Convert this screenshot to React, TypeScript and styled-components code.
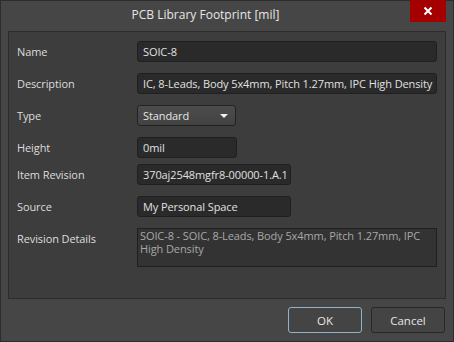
import React from 'react';
import styled, { createGlobalStyle } from 'styled-components';

const GlobalStyle = createGlobalStyle`
  html, body {
    margin: 0;
    padding: 0;
    background: #454545;
  }
  body {
    font-family: 'Open Sans', 'Noto Sans', sans-serif;
    font-size: 11px;
    letter-spacing: -0.1px;
    color: #dcdcdc;
  }
`;

const Window = styled.div`
  width: 454px;
  height: 342px;
  box-sizing: border-box;
  background: #464646;
  border: 1px solid #2c2c2c;
  display: flex;
  flex-direction: column;
`;

const TitleBar = styled.div`
  height: 30px;
  display: flex;
  align-items: flex-start;
`;

const Title = styled.h1`
  flex: 1;
  margin: 0;
  padding-top: 5px;
  text-align: center;
  font-size: 12px;
  font-weight: normal;
  letter-spacing: 0;
  color: #e6e6e6;
`;

const CloseButton = styled.button`
  width: 36px;
  height: 22px;
  margin-right: 7px;
  margin-top: -1px;
  border: none;
  padding: 0;
  background: #a50000;
  display: flex;
  align-items: center;
  justify-content: center;
`;

const Panel = styled.div`
  margin: 0 7px;
  height: 268px;
  box-sizing: border-box;
  background: #3d3d3d;
  border: 1px solid #2c2c2c;
  padding: 9px 8px 0 8px;
  display: flex;
  flex-direction: column;
`;

const Row = styled.div<{ $gap?: number }>`
  display: grid;
  grid-template-columns: 120px 1fr;
  align-items: start;
  margin-bottom: ${({ $gap }) => ($gap ?? 11)}px;
`;

const Label = styled.label`
  line-height: 21px;
  color: #dcdcdc;
`;

const Field = styled.div<{ $width: number }>`
  width: ${({ $width }) => $width}px;
  height: 21px;
  box-sizing: border-box;
  background: #2a2a2a;
  border: 1px solid #1f1f1f;
  border-radius: 3px;
  padding: 0 5px;
  line-height: 19px;
  white-space: nowrap;
  overflow: hidden;
  color: #e0e0e0;
`;

const Select = styled.div`
  width: 99px;
  height: 21px;
  box-sizing: border-box;
  background: linear-gradient(#4c4c4c, #424242);
  border: 1px solid #222;
  border-radius: 3px;
  padding: 0 5px;
  line-height: 19px;
  display: flex;
  justify-content: space-between;
  align-items: center;
  color: #e6e6e6;
`;

const Arrow = styled.span`
  width: 0;
  height: 0;
  border-left: 4px solid transparent;
  border-right: 4px solid transparent;
  border-top: 4px solid #f0f0f0;
  margin-right: 2px;
`;

const TextArea = styled.div`
  width: 300px;
  height: 39px;
  box-sizing: border-box;
  background: #333333;
  border: 1px solid #1f1f1f;
  padding: 0 2px;
  line-height: 13px;
  color: #a8a8a8;
`;

const Footer = styled.div`
  display: flex;
  justify-content: flex-end;
  gap: 9px;
  padding: 8px 8px 0 0;
`;

const Button = styled.button<{ $primary?: boolean }>`
  width: 74px;
  height: 26px;
  box-sizing: border-box;
  background: #444444;
  border: 1px solid ${({ $primary }) => ($primary ? '#8fb3cc' : '#262626')};
  border-radius: 3px;
  font-family: inherit;
  font-size: 11.5px;
  color: #e6e6e6;
  padding: 0;
`;

export default function App() {
  return (
    <>
      <GlobalStyle />
      <Window>
        <TitleBar>
          <Title>PCB Library Footprint [mil]</Title>
          <CloseButton>
            <svg width="10" height="10" viewBox="0 0 10 10">
              <path d="M1.5 1.5 L8.5 8.5 M8.5 1.5 L1.5 8.5" stroke="#fff" strokeWidth="2" />
            </svg>
          </CloseButton>
        </TitleBar>
        <Panel>
          <Row>
            <Label>Name</Label>
            <Field $width={300}>SOIC-8</Field>
          </Row>
          <Row>
            <Label>Description</Label>
            <Field $width={300}>IC, 8-Leads, Body 5x4mm, Pitch 1.27mm, IPC High Density</Field>
          </Row>
          <Row>
            <Label>Type</Label>
            <Select>
              Standard
              <Arrow />
            </Select>
          </Row>
          <Row $gap={6}>
            <Label>Height</Label>
            <Field $width={100}>0mil</Field>
          </Row>
          <Row>
            <Label>Item Revision</Label>
            <Field $width={154}>370aj2548mgfr8-00000-1.A.1</Field>
          </Row>
          <Row>
            <Label>Source</Label>
            <Field $width={154}>My Personal Space</Field>
          </Row>
          <Row>
            <Label>Revision Details</Label>
            <TextArea>SOIC-8 - SOIC, 8-Leads, Body 5x4mm, Pitch 1.27mm, IPC High Density</TextArea>
          </Row>
        </Panel>
        <Footer>
          <Button $primary>OK</Button>
          <Button>Cancel</Button>
        </Footer>
      </Window>
    </>
  );
}
